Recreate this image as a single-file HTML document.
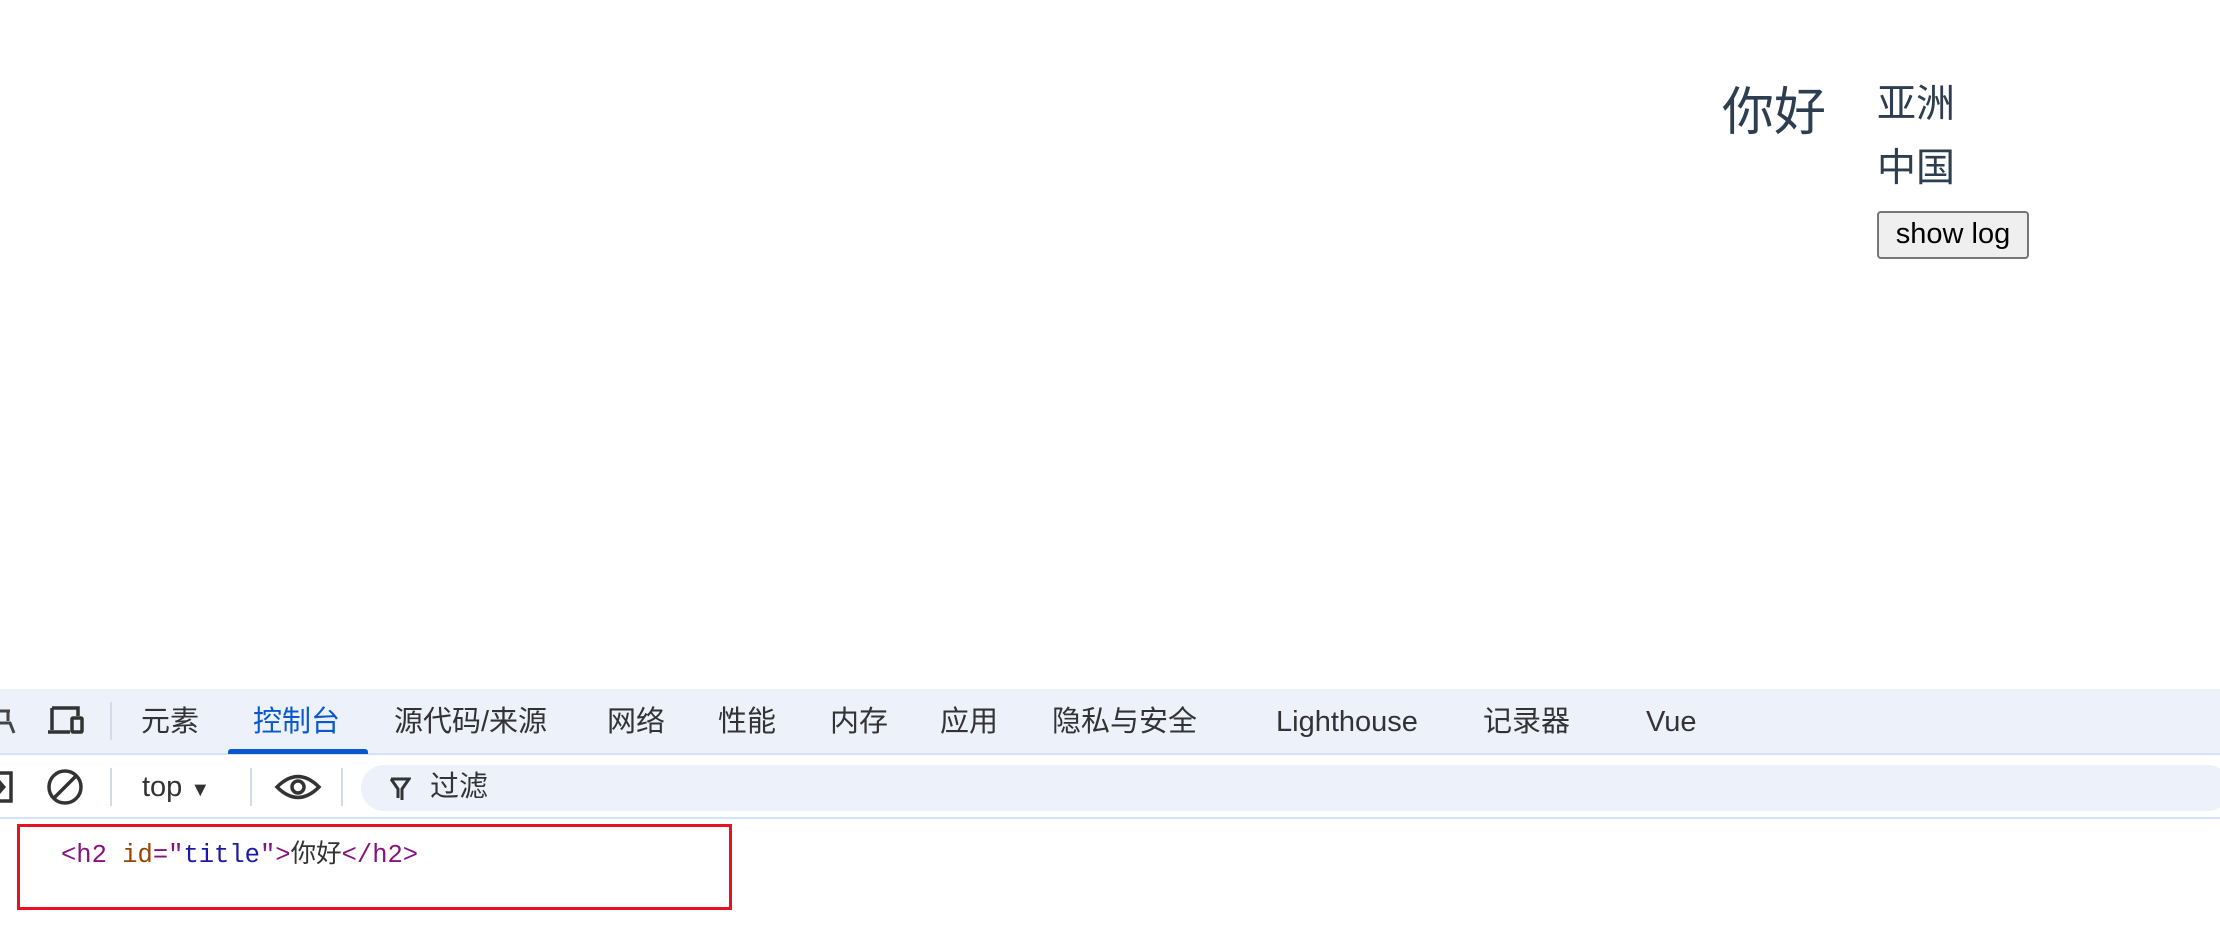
<!DOCTYPE html>
<html><head><meta charset="utf-8"><style>
*{margin:0;padding:0;box-sizing:border-box}
body{width:2220px;height:933px;background:#fff;position:relative;overflow:hidden;font-family:"Liberation Sans","Noto Sans CJK SC",sans-serif;}
.a{position:absolute;white-space:nowrap}
.vt{color:#2c3e50}
.tab{position:absolute;top:700px;font-size:29px;color:#333;line-height:44px}
</style></head><body>
<div class="a vt" style="left:1722px;top:82px;font-size:52px;line-height:62px">你好</div>
<div class="a vt" style="left:1877px;top:80px;font-size:39px;line-height:50px">亚洲</div>
<div class="a vt" style="left:1877px;top:144px;font-size:39px;line-height:50px">中国</div>
<div class="a" style="left:1877px;top:211px;width:152px;height:48px;border:2px solid #767676;border-radius:4px;background:#efefef;font-size:29px;line-height:42px;text-align:center;color:#000">show log</div>

<div class="a" style="left:0;top:689px;width:2220px;height:66px;background:#ecf1fa;border-bottom:2px solid #d3e3fd"></div>
<svg class="a" style="left:0;top:703px" width="20" height="36"><path d="M0 8h10M8 8v10M0 20h10l4 10" stroke="#444" stroke-width="3" fill="none"/></svg>
<svg class="a" style="left:46px;top:704px" width="40" height="34"><path d="M6 4h26v8M6 4v22M2 28h22" stroke="#333" stroke-width="3.5" fill="none"/><rect x="26" y="14" width="10" height="14" rx="1" stroke="#333" stroke-width="3.5" fill="none"/></svg>
<div class="a" style="left:110px;top:702px;width:2px;height:38px;background:#d3dbe8"></div>
<div class="tab" style="left:141px">元素</div>
<div class="tab" style="left:253px;color:#0b57d0">控制台</div>
<div class="a" style="left:228px;top:749px;width:140px;height:5px;background:#0b57d0;border-radius:3px 3px 0 0"></div>
<div class="tab" style="left:394px">源代码/来源</div>
<div class="tab" style="left:607px">网络</div>
<div class="tab" style="left:718px">性能</div>
<div class="tab" style="left:830px">内存</div>
<div class="tab" style="left:940px">应用</div>
<div class="tab" style="left:1052px">隐私与安全</div>
<div class="tab" style="left:1276px">Lighthouse</div>
<div class="tab" style="left:1483px">记录器</div>
<div class="tab" style="left:1646px">Vue</div>

<svg class="a" style="left:0;top:770px" width="14" height="34"><path d="M0 3h11v28H0" stroke="#333" stroke-width="3.5" fill="none"/><path d="M0 10l6 7-6 7z" fill="#333"/></svg>
<svg class="a" style="left:46px;top:768px" width="38" height="38"><circle cx="19" cy="19" r="16" stroke="#333" stroke-width="3.5" fill="none"/><path d="M8 30L30 8" stroke="#333" stroke-width="3.5"/></svg>
<div class="a" style="left:110px;top:768px;width:2px;height:38px;background:#d3dbe8"></div>
<div class="a" style="left:142px;top:766px;font-size:29px;color:#333;line-height:42px">top <span style="font-size:20px">▼</span></div>
<div class="a" style="left:250px;top:768px;width:2px;height:38px;background:#d3dbe8"></div>
<svg class="a" style="left:274px;top:772px" width="48" height="30"><path d="M3 15Q24-6 45 15Q24 36 3 15z" stroke="#333" stroke-width="3.5" fill="none"/><circle cx="24" cy="15" r="6" stroke="#333" stroke-width="3.5" fill="none"/></svg>
<div class="a" style="left:341px;top:768px;width:2px;height:38px;background:#d3dbe8"></div>
<div class="a" style="left:361px;top:765px;width:1870px;height:46px;background:#ecf1fa;border-radius:23px"></div>
<svg class="a" style="left:389px;top:776px" width="22" height="26"><path d="M2 3h18l-7 10v11M2 3l7 10v9" stroke="#333" stroke-width="3" fill="none"/></svg>
<div class="a" style="left:430px;top:766px;font-size:29px;color:#333;line-height:42px">过滤</div>
<div class="a" style="left:0;top:817px;width:2220px;height:2px;background:#d3e3fd"></div>

<div class="a" style="left:17px;top:824px;width:715px;height:86px;border:3px solid #e81123"></div>
<div class="a" style="left:61px;top:840px;font-family:'Liberation Mono','Noto Sans CJK SC',monospace;font-size:25.5px;line-height:32px"><span style="color:#881280">&lt;h2</span> <span style="color:#994500">id</span><span style="color:#881280">="</span><span style="color:#1a1aa6">title</span><span style="color:#881280">"&gt;</span><span style="color:#333">你好</span><span style="color:#881280">&lt;/h2&gt;</span></div>
</body></html>
